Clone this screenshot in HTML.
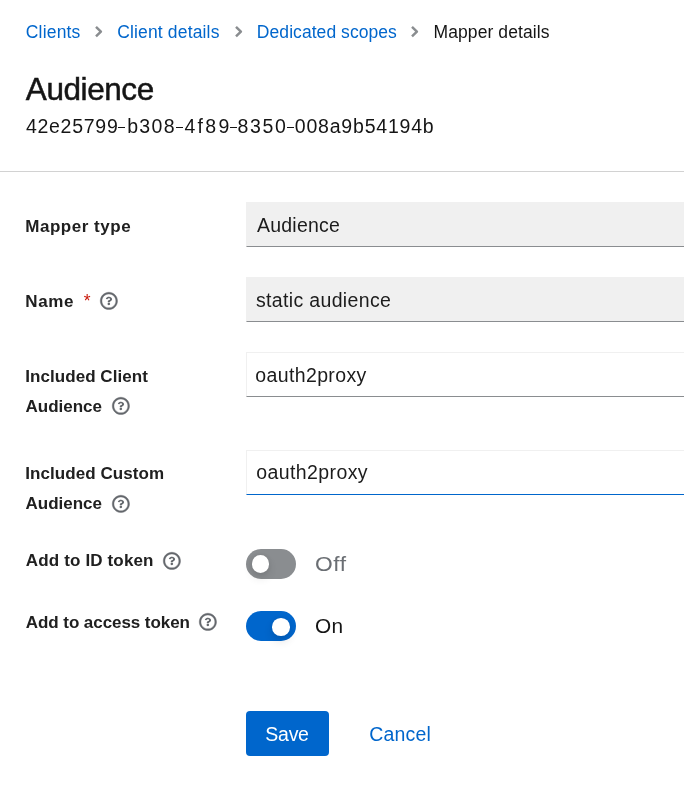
<!DOCTYPE html>
<html lang="en">
<head>
<meta charset="utf-8">
<title>Mapper details</title>
<style>
  html, body { margin: 0; padding: 0; }
  body {
    width: 684px; height: 797px; overflow: hidden; position: relative;
    background: #ffffff; color: #151515;
    font-family: "Liberation Sans", sans-serif;
  }
  .t { position: absolute; white-space: nowrap; line-height: 1; margin: 0; font-weight: 400; transform-origin: 0 0; }
  #root { position: absolute; left: 0; top: 0; width: 684px; height: 797px; will-change: transform; }
  .link { color: #0066cc; }
  .chev { position: absolute; top: 25px; width: 10px; height: 14px; }
  h1.t { -webkit-text-stroke: 0.5px #151515; }
  .hy { position: absolute; top: 126.5px; width: 6.8px; height: 1.9px; background: #151515; }
  .divider { position: absolute; left: 0; top: 171px; width: 684px; height: 1px; background: #d2d2d2; }
  .lbl { font-weight: 700; color: #202020; }
  .req { color: #c9190b; }
  .help { position: absolute; width: 17.8px; height: 17.8px; overflow: visible; }
  .inp {
    position: absolute; left: 246px; width: 440px; height: 45px; box-sizing: border-box;
    border: 1px solid #f0f0f0; border-bottom: 1px solid #8a8d90; background: #fff;
  }
  .inp.ro { background: #f0f0f0; }
  .inp.focus { border-bottom: 1px solid #0066cc; }
  .val { color: #1c1c1c; }
  .sw { position: absolute; left: 246px; width: 50px; height: 30px; border-radius: 15px; }
  .sw.off { background: #8a8d90; top: 549px; }
  .sw.on { background: #0066cc; top: 611px; }
  .sw i { position: absolute; top: 6.25px; width: 17.5px; height: 17.5px; border-radius: 50%; background: #fff; box-shadow: 0 5px 10px rgba(3,3,3,.12), 0 0 5px rgba(3,3,3,.06); }
  .sw.off i { left: 5.9px; }
  .sw.on i { left: 26.25px; top: 7.2px; }
  .swl.off { color: #6a6e73; }
  .btn { position: absolute; left: 246px; top: 711px; width: 83px; height: 45px; border-radius: 4px; background: #0066cc; }
  .btnl { color: #fff; }
  .cancel { color: #0066cc; }
</style>
</head>
<body>
<div id="root">
  <!-- breadcrumb -->
  <span class="t bc link" id="b1" style="left:25.80px;top:23.99px;font-size:17.5px;letter-spacing:0.175px">Clients</span>
  <svg class="chev" style="left:94px" viewBox="0 0 10 14"><path d="M2 1.9 L6.9 6.6 L2 11.3" fill="none" stroke="#8a8d90" stroke-width="2.5" stroke-linejoin="round"/></svg>
  <span class="t bc link" id="b2" style="left:117.20px;top:23.99px;font-size:17.5px;letter-spacing:0.154px">Client details</span>
  <svg class="chev" style="left:233.8px" viewBox="0 0 10 14"><path d="M2 1.9 L6.9 6.6 L2 11.3" fill="none" stroke="#8a8d90" stroke-width="2.5" stroke-linejoin="round"/></svg>
  <span class="t bc link" id="b3" style="left:256.85px;top:23.99px;font-size:17.5px;letter-spacing:0.061px">Dedicated scopes</span>
  <svg class="chev" style="left:410px" viewBox="0 0 10 14"><path d="M2 1.9 L6.9 6.6 L2 11.3" fill="none" stroke="#8a8d90" stroke-width="2.5" stroke-linejoin="round"/></svg>
  <span class="t bc" id="b4" style="left:433.50px;top:23.99px;font-size:17.5px;letter-spacing:0.088px">Mapper details</span>

  <h1 class="t" id="h1" style="left:25.80px;top:73.86px;font-size:31.5px;letter-spacing:-0.428px">Audience</h1>
  <span class="t sub" id="sub1" style="left:25.90px;top:116.97px;font-size:19.5px;letter-spacing:0.727px">42e25799</span><i class="hy" style="left:118.2px"></i><span class="t sub" id="sub2" style="left:127.15px;top:116.97px;font-size:19.5px;letter-spacing:1.384px">b308</span><i class="hy" style="left:176.4px"></i><span class="t sub" id="sub3" style="left:184.40px;top:116.97px;font-size:19.5px;letter-spacing:2.301px">4f89</span><i class="hy" style="left:229.9px"></i><span class="t sub" id="sub4" style="left:237.45px;top:116.97px;font-size:19.5px;letter-spacing:1.716px">8350</span><i class="hy" style="left:286.9px"></i><span class="t sub" id="sub5" style="left:294.75px;top:116.97px;font-size:19.5px;letter-spacing:0.802px">008a9b54194b</span>
  <div class="divider"></div>

  <!-- Mapper type -->
  <span class="t lbl" id="l1" style="left:25.25px;top:217.61px;font-size:17px;letter-spacing:0.525px">Mapper type</span>
  <div class="inp ro" style="top:202px"></div>
  <span class="t val" id="v1" style="left:257.00px;top:216.49px;font-size:19.5px;letter-spacing:0.214px">Audience</span>

  <!-- Name -->
  <span class="t lbl" id="l2" style="left:25.25px;top:292.61px;font-size:17px;letter-spacing:0.667px">Name</span>
  <span class="t req" id="r2" style="left:83.75px;top:293.19px;font-size:17.5px;letter-spacing:0.000px">*</span>
  <svg class="help" style="left:99.95px;top:291.60px" viewBox="0 0 512 512"><path fill="#63676c" stroke="#63676c" stroke-width="12" d="M256 8C119.043 8 8 119.083 8 256c0 136.997 111.043 248 248 248s248-111.003 248-248C504 119.083 392.957 8 256 8zm0 448c-110.532 0-200-89.431-200-200 0-110.495 89.472-200 200-200 110.491 0 200 89.471 200 200 0 110.53-89.431 200-200 200z"/><g transform="translate(254 256) scale(0.88 0.82) translate(-256 -261)" fill="#63676c"><path d="M363.244 200.8c0 67.052-72.421 68.084-72.421 92.863V300c0 6.627-5.373 12-12 12h-45.647c-6.627 0-12-5.373-12-12v-8.659c0-35.745 27.1-50.034 47.579-61.516 17.561-9.845 28.324-16.541 28.324-29.579 0-17.246-21.999-28.693-39.784-28.693-23.189 0-33.894 10.977-48.942 29.969-4.057 5.12-11.46 6.071-16.666 2.124l-27.824-21.098c-5.107-3.872-6.251-11.066-2.644-16.363C184.846 131.491 214.94 112 261.794 112c49.071 0 101.45 38.304 101.45 88.8z"/><path d="M298 368c0 23.159-18.841 42-42 42s-42-18.841-42-42 18.841-42 42-42 42 18.841 42 42z"/></g></svg>
  <div class="inp ro" style="top:277px"></div>
  <span class="t val" id="v2" style="left:256.00px;top:291.09px;font-size:19.5px;letter-spacing:0.339px">static audience</span>

  <!-- Included Client Audience -->
  <span class="t lbl" id="l3a" style="left:25.25px;top:367.51px;font-size:17px;letter-spacing:0.054px">Included Client</span>
  <span class="t lbl" id="l3b" style="left:25.50px;top:398.21px;font-size:17px;letter-spacing:0.000px">Audience</span>
  <svg class="help" style="left:112.15px;top:397.10px" viewBox="0 0 512 512"><path fill="#63676c" stroke="#63676c" stroke-width="12" d="M256 8C119.043 8 8 119.083 8 256c0 136.997 111.043 248 248 248s248-111.003 248-248C504 119.083 392.957 8 256 8zm0 448c-110.532 0-200-89.431-200-200 0-110.495 89.472-200 200-200 110.491 0 200 89.471 200 200 0 110.53-89.431 200-200 200z"/><g transform="translate(254 256) scale(0.88 0.82) translate(-256 -261)" fill="#63676c"><path d="M363.244 200.8c0 67.052-72.421 68.084-72.421 92.863V300c0 6.627-5.373 12-12 12h-45.647c-6.627 0-12-5.373-12-12v-8.659c0-35.745 27.1-50.034 47.579-61.516 17.561-9.845 28.324-16.541 28.324-29.579 0-17.246-21.999-28.693-39.784-28.693-23.189 0-33.894 10.977-48.942 29.969-4.057 5.12-11.46 6.071-16.666 2.124l-27.824-21.098c-5.107-3.872-6.251-11.066-2.644-16.363C184.846 131.491 214.94 112 261.794 112c49.071 0 101.45 38.304 101.45 88.8z"/><path d="M298 368c0 23.159-18.841 42-42 42s-42-18.841-42-42 18.841-42 42-42 42 18.841 42 42z"/></g></svg>
  <div class="inp" style="top:352px"></div>
  <span class="t val" id="v3" style="left:255.25px;top:366.49px;font-size:19.5px;letter-spacing:0.375px">oauth2proxy</span>

  <!-- Included Custom Audience -->
  <span class="t lbl" id="l4a" style="left:25.25px;top:464.51px;font-size:17px;letter-spacing:0.071px">Included Custom</span>
  <span class="t lbl" id="l4b" style="left:25.50px;top:495.41px;font-size:17px;letter-spacing:0.000px">Audience</span>
  <svg class="help" style="left:112.15px;top:494.70px" viewBox="0 0 512 512"><path fill="#63676c" stroke="#63676c" stroke-width="12" d="M256 8C119.043 8 8 119.083 8 256c0 136.997 111.043 248 248 248s248-111.003 248-248C504 119.083 392.957 8 256 8zm0 448c-110.532 0-200-89.431-200-200 0-110.495 89.472-200 200-200 110.491 0 200 89.471 200 200 0 110.53-89.431 200-200 200z"/><g transform="translate(254 256) scale(0.88 0.82) translate(-256 -261)" fill="#63676c"><path d="M363.244 200.8c0 67.052-72.421 68.084-72.421 92.863V300c0 6.627-5.373 12-12 12h-45.647c-6.627 0-12-5.373-12-12v-8.659c0-35.745 27.1-50.034 47.579-61.516 17.561-9.845 28.324-16.541 28.324-29.579 0-17.246-21.999-28.693-39.784-28.693-23.189 0-33.894 10.977-48.942 29.969-4.057 5.12-11.46 6.071-16.666 2.124l-27.824-21.098c-5.107-3.872-6.251-11.066-2.644-16.363C184.846 131.491 214.94 112 261.794 112c49.071 0 101.45 38.304 101.45 88.8z"/><path d="M298 368c0 23.159-18.841 42-42 42s-42-18.841-42-42 18.841-42 42-42 42 18.841 42 42z"/></g></svg>
  <div class="inp focus" style="top:450px"></div>
  <span class="t val" id="v4" style="left:256.25px;top:463.49px;font-size:19.5px;letter-spacing:0.400px">oauth2proxy</span>

  <!-- Add to ID token -->
  <span class="t lbl" id="l5" style="left:25.80px;top:551.61px;font-size:17px;letter-spacing:0.150px">Add to ID token</span>
  <svg class="help" style="left:162.85px;top:551.80px" viewBox="0 0 512 512"><path fill="#63676c" stroke="#63676c" stroke-width="12" d="M256 8C119.043 8 8 119.083 8 256c0 136.997 111.043 248 248 248s248-111.003 248-248C504 119.083 392.957 8 256 8zm0 448c-110.532 0-200-89.431-200-200 0-110.495 89.472-200 200-200 110.491 0 200 89.471 200 200 0 110.53-89.431 200-200 200z"/><g transform="translate(254 256) scale(0.88 0.82) translate(-256 -261)" fill="#63676c"><path d="M363.244 200.8c0 67.052-72.421 68.084-72.421 92.863V300c0 6.627-5.373 12-12 12h-45.647c-6.627 0-12-5.373-12-12v-8.659c0-35.745 27.1-50.034 47.579-61.516 17.561-9.845 28.324-16.541 28.324-29.579 0-17.246-21.999-28.693-39.784-28.693-23.189 0-33.894 10.977-48.942 29.969-4.057 5.12-11.46 6.071-16.666 2.124l-27.824-21.098c-5.107-3.872-6.251-11.066-2.644-16.363C184.846 131.491 214.94 112 261.794 112c49.071 0 101.45 38.304 101.45 88.8z"/><path d="M298 368c0 23.159-18.841 42-42 42s-42-18.841-42-42 18.841-42 42-42 42 18.841 42 42z"/></g></svg>
  <div class="sw off"><i></i></div>
  <span class="t swl off" id="s5" style="left:315.20px;top:554.89px;font-size:19.5px;letter-spacing:0.500px;transform:scaleX(1.1690)">Off</span>

  <!-- Add to access token -->
  <span class="t lbl" id="l6" style="left:25.80px;top:613.61px;font-size:17px;letter-spacing:-0.066px">Add to access token</span>
  <svg class="help" style="left:198.95px;top:613.20px" viewBox="0 0 512 512"><path fill="#63676c" stroke="#63676c" stroke-width="12" d="M256 8C119.043 8 8 119.083 8 256c0 136.997 111.043 248 248 248s248-111.003 248-248C504 119.083 392.957 8 256 8zm0 448c-110.532 0-200-89.431-200-200 0-110.495 89.472-200 200-200 110.491 0 200 89.471 200 200 0 110.53-89.431 200-200 200z"/><g transform="translate(254 256) scale(0.88 0.82) translate(-256 -261)" fill="#63676c"><path d="M363.244 200.8c0 67.052-72.421 68.084-72.421 92.863V300c0 6.627-5.373 12-12 12h-45.647c-6.627 0-12-5.373-12-12v-8.659c0-35.745 27.1-50.034 47.579-61.516 17.561-9.845 28.324-16.541 28.324-29.579 0-17.246-21.999-28.693-39.784-28.693-23.189 0-33.894 10.977-48.942 29.969-4.057 5.12-11.46 6.071-16.666 2.124l-27.824-21.098c-5.107-3.872-6.251-11.066-2.644-16.363C184.846 131.491 214.94 112 261.794 112c49.071 0 101.45 38.304 101.45 88.8z"/><path d="M298 368c0 23.159-18.841 42-42 42s-42-18.841-42-42 18.841-42 42-42 42 18.841 42 42z"/></g></svg>
  <div class="sw on"><i></i></div>
  <span class="t swl" id="s6" style="left:315.20px;top:617.29px;font-size:19.5px;letter-spacing:0.300px;transform:scaleX(1.0680)">On</span>

  <!-- actions -->
  <div class="btn"></div>
  <span class="t btnl" id="save" style="left:265.30px;top:725.29px;font-size:19.5px;letter-spacing:-0.259px">Save</span>
  <span class="t cancel" id="cancel" style="left:369.15px;top:725.29px;font-size:19.5px;letter-spacing:0.200px">Cancel</span>
</div>
</body>
</html>
